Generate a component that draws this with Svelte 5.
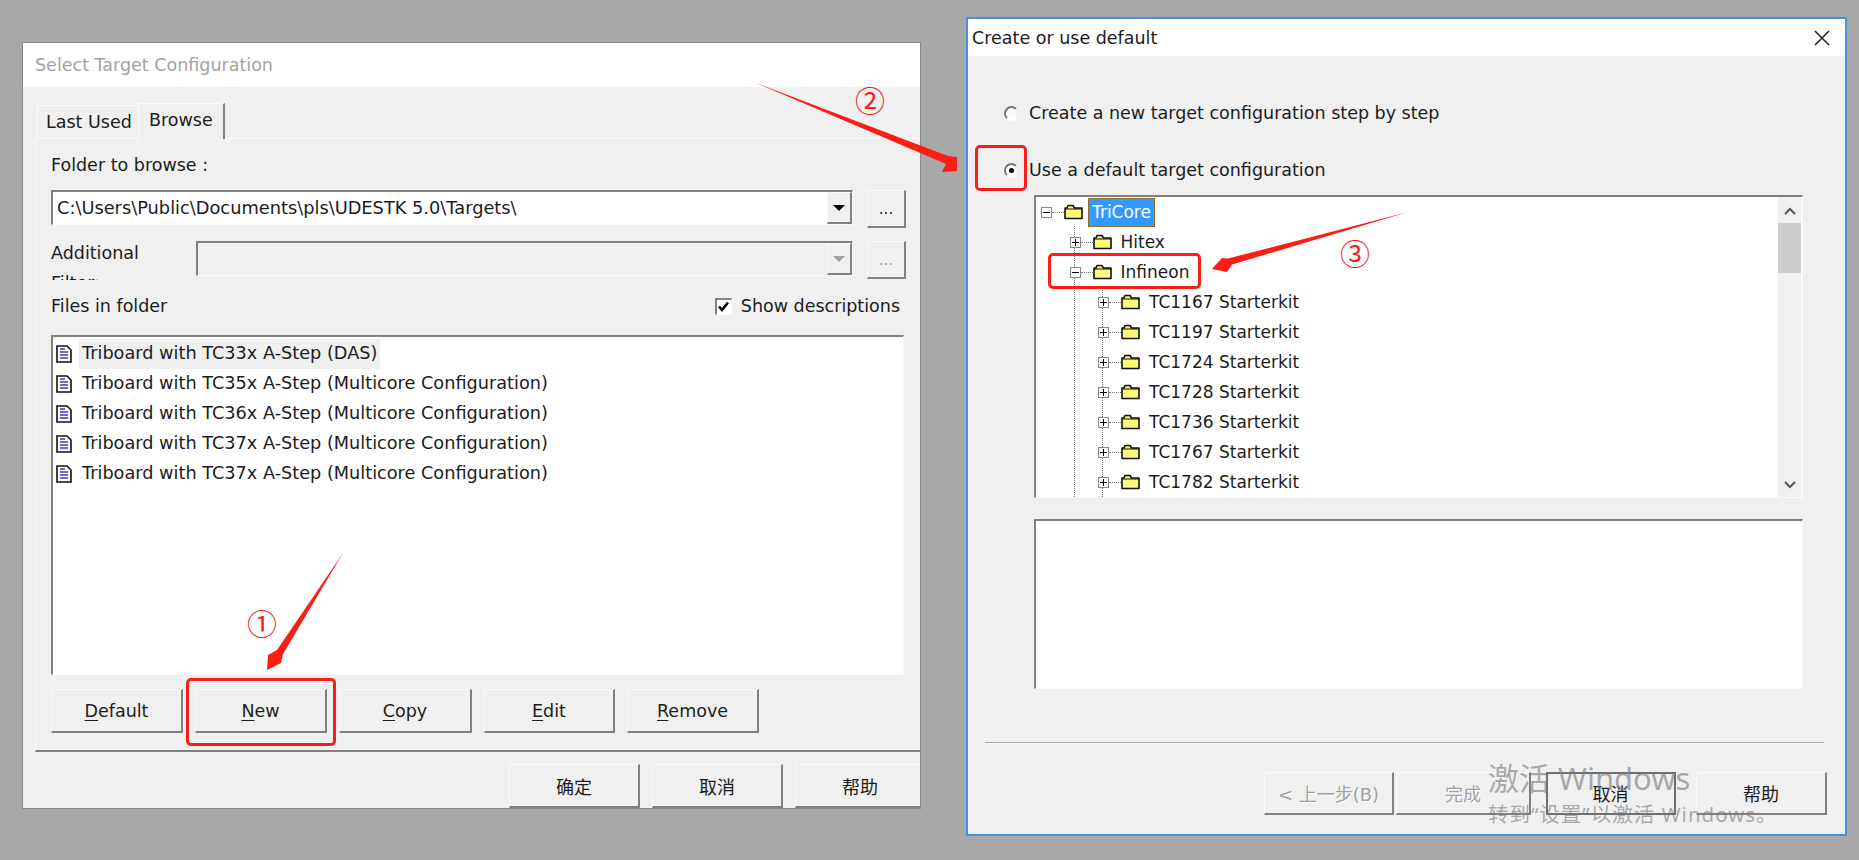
<script>
  const files = [
    'Triboard with TC33x A-Step (DAS)',
    'Triboard with TC35x A-Step (Multicore Configuration)',
    'Triboard with TC36x A-Step (Multicore Configuration)',
    'Triboard with TC37x A-Step (Multicore Configuration)',
    'Triboard with TC37x A-Step (Multicore Configuration)'
  ];
  const actions = [
    { first: 'D', rest: 'efault', w: 132 },
    { first: 'N', rest: 'ew', w: 132 },
    { first: 'C', rest: 'opy', w: 133 },
    { first: 'E', rest: 'dit', w: 131 },
    { first: 'R', rest: 'emove', w: 132 }
  ];
  const tree = [
    { label: 'TriCore', level: 0, open: true, selected: true },
    { label: 'Hitex', level: 1 },
    { label: 'Infineon', level: 1, open: true },
    { label: 'TC1167 Starterkit', level: 2 },
    { label: 'TC1197 Starterkit', level: 2 },
    { label: 'TC1724 Starterkit', level: 2 },
    { label: 'TC1728 Starterkit', level: 2 },
    { label: 'TC1736 Starterkit', level: 2 },
    { label: 'TC1767 Starterkit', level: 2 },
    { label: 'TC1782 Starterkit', level: 2 }
  ];
</script>

<div class="desktop">
  <section class="win left">
    <header class="title muted">Select Target Configuration</header>
    <div class="tabs">
      <div class="tab">Last Used</div>
      <div class="tab active">Browse</div>
    </div>
    <div class="pane">
      <div class="label folder-label">Folder to browse :</div>
      <div class="field-row">
        <div class="combo">
          <span class="value">C:\Users\Public\Documents\pls\UDESTK 5.0\Targets\</span>
          <span class="drop"><i class="tri"></i></span>
        </div>
        <button class="btn dots">...</button>
      </div>
      <div class="field-row second">
        <div class="clip-label">Additional<br />Filter:</div>
        <div class="combo off">
          <span class="value"></span>
          <span class="drop"><i class="tri"></i></span>
        </div>
        <button class="btn dots off-text">...</button>
      </div>
      <div class="files-row">
        <span>Files in folder</span>
        <span class="check">
          <span class="box">
            <svg width="13" height="13" viewBox="0 0 13 13"><path d="M2 6.5 5 10 11 2.5" fill="none" stroke="#000" stroke-width="2.6" /></svg>
          </span>
          Show descriptions
        </span>
      </div>
      <div class="list">
        {#each files as f, i}
          <div class="file">
            <svg class="doc" width="16" height="18" viewBox="0 0 16 18">
              <path d="M1 1h10l4 4v12H1z" fill="#fff" stroke="#111" stroke-width="1.6" />
              <path d="M4 7h8M4 10h8M4 13h8M4 4h5" stroke="#3a3ab0" stroke-width="1.3" />
            </svg>
            <span class="fname" class:hl={i === 0}>{f}</span>
          </div>
        {/each}
      </div>
      <div class="actions">
        {#each actions as a}
          <button class="btn act" style="width:{a.w}px"><u>{a.first}</u>{a.rest}</button>
        {/each}
      </div>
    </div>
    <div class="left-foot">
      <button class="btn foot">确定</button>
      <button class="btn foot">取消</button>
      <button class="btn foot last">帮助</button>
    </div>
  </section>

  <section class="win right">
    <header class="title">
      <span>Create or use default</span>
      <svg class="close" width="16" height="16" viewBox="0 0 16 16"><path d="M1 1l14 14M15 1 1 15" stroke="#222" stroke-width="1.5" /></svg>
    </header>
    <div class="radio r1"><span class="dot"></span>Create a new target configuration step by step</div>
    <div class="radio r2"><span class="dot on"></span>Use a default target configuration</div>
    <div class="tree">
      <div class="vline v1"></div>
      <div class="vline v2"></div>
      {#each tree as n}
        <div class="node" style="padding-left:{5 + n.level * 28.5}px">
          <span class="exp" class:open={n.open}></span>
          <span class="conn"></span>
          <svg class="folder" width="19" height="16" viewBox="0 0 19 16">
            <path d="M1 14.5V4h2l1-2.5h5L10.500 4H18v10.500z" fill="#fdf77a" stroke="#111" stroke-width="1.6" stroke-linejoin="round" />
            <path d="M1 5h17" stroke="#111" stroke-width="1" />
          </svg>
          <span class="nlabel" class:sel={n.selected}>{n.label}</span>
        </div>
      {/each}
      <div class="sb">
        <svg class="chev" width="12" height="8" viewBox="0 0 12 8"><path d="M1 7l5-5 5 5" fill="none" stroke="#555" stroke-width="2" /></svg>
        <div class="thumb"></div>
        <div class="grow"></div>
        <svg class="chev" width="12" height="8" viewBox="0 0 12 8"><path d="M1 1l5 5 5-5" fill="none" stroke="#555" stroke-width="2" /></svg>
      </div>
    </div>
    <div class="desc"></div>
    <div class="sep"></div>
    <div class="wizard">
      <button class="btn wz w1 disabled">&lt; 上一步(B)</button>
      <button class="btn wz w2 disabled">完成</button>
      <button class="btn wz w3 default">取消</button>
      <button class="btn wz w4">帮助</button>
    </div>
  </section>

  <div class="redbox b1"></div>
  <div class="redbox b2"></div>
  <div class="redbox b3"></div>

  <svg class="arrows" width="1859" height="860" viewBox="0 0 1859 860">
    <polygon fill="#fa1e14" points="343,553 283,654 281,663 267,670 268,655 277,650" />
    <polygon fill="#fa1e14" points="756,83 948,156 957,157 957,171 942,172 946,164" />
    <polygon fill="#fa1e14" points="1408,212 1228,258.500 1222,258 1212,269 1227,272 1232,264.500" />
  </svg>
  <span class="num n1">①</span>
  <span class="num n2">②</span>
  <span class="num n3">③</span>

  <div class="mark">
    <div class="m1">激活 Windows</div>
    <div class="m2">转到“设置”以激活 Windows。</div>
  </div>
</div>

<style>
  :global(body) { margin: 0; background: #a8a8a8; overflow: hidden; }
  * { box-sizing: border-box; }
  .desktop {
    position: relative; width: 1859px; height: 860px; overflow: hidden;
    background: #a8a8a8; color: #1c1c1c;
    font-family: "DejaVu Sans", "Noto Sans CJK SC", sans-serif; font-size: 17.5px;
  }
  .win { position: absolute; background: #f0f0f0; overflow: hidden; }
  .left { left: 22px; top: 42px; width: 899px; height: 767px; border: 1px solid #8a8a8a; }
  .right { left: 966px; top: 17px; width: 881px; height: 819px; border: 2px solid #4a90d9; }
  .title { background: #fff; display: flex; align-items: center; justify-content: space-between; }
  .left .title { height: 44px; padding-left: 12px; }
  .right .title { height: 37px; padding-left: 4px; padding-right: 15px; }
  .muted { color: #a3a3a3; }

  .tabs { display: flex; align-items: flex-end; height: 51px; padding-left: 14px; }
  .tab {
    width: 101px; height: 33px; padding-left: 8px; line-height: 33px;
    border: 1px solid #fafafa; border-bottom: 0; border-right: 0;
  }
  .tab.active {
    width: 87px; height: 36px; line-height: 32px; padding-left: 10px;
    border-right: 2px solid #808080; background: #f0f0f0;
    margin-bottom: -1px; position: relative; z-index: 1;
  }
  .pane {
    margin-left: 12px; height: 614px; padding: 14px 0 0 15px;
    border-top: 1px solid #fafafa; border-left: 1px solid #fafafa; border-bottom: 2px solid #808080;
  }
  .label { height: 24px; line-height: 24px; }
  .field-row { display: flex; gap: 14px; margin-top: 13px; align-items: flex-start; }
  .field-row.second { gap: 0; }
  .clip-label { width: 145px; height: 42px; overflow: hidden; line-height: 30px; margin-top: -3px; }
  .combo {
    width: 802px; height: 35px; background: #fff; display: flex; justify-content: space-between; align-items: stretch;
    border-top: 2px solid #808080; border-left: 2px solid #808080;
    border-bottom: 1px solid #fafafa; border-right: 1px solid #fafafa;
  }
  .second .combo { width: 657px; background: #f0f0f0; margin-right: 14px; }
  .value { padding-left: 4px; line-height: 32px; white-space: nowrap; font-size: 17.800px; }
  .drop {
    width: 25px; display: flex; align-items: center; justify-content: center; background: #f0f0f0;
    border-top: 1px solid #fafafa; border-left: 1px solid #fafafa;
    border-bottom: 2px solid #808080; border-right: 2px solid #808080;
  }
  .tri { width: 0; height: 0; border: 6px solid transparent; border-top: 6px solid #000; border-bottom: 0; }
  .off .tri { border-top-color: #a0a0a0; }

  .btn {
    font: inherit; color: inherit; background: #f0f0f0; padding: 0; margin: 0;
    border-top: 1px solid #fafafa; border-left: 1px solid #fafafa;
    border-bottom: 2px solid #808080; border-right: 2px solid #808080;
  }
  .dots { width: 39px; height: 38px; line-height: 30px; font-size: 15px; }
  .off-text { color: #a0a0a0; }

  .files-row {
    display: flex; justify-content: space-between; align-items: center; height: 28px; margin-top: 12px; padding-right: 20px;
  }
  .check { display: flex; align-items: center; gap: 9px; }
  .box {
    width: 17px; height: 17px; background: #fff; display: flex; align-items: center; justify-content: center;
    border-top: 2px solid #808080; border-left: 2px solid #808080;
    border-bottom: 1px solid #fafafa; border-right: 1px solid #fafafa;
  }
  .list {
    width: 853px; height: 340px; margin-top: 15px; background: #fff; padding: 2px 0 0 3px; font-size: 17.700px;
    border-top: 2px solid #808080; border-left: 2px solid #808080;
    border-bottom: 1px solid #fafafa; border-right: 1px solid #fafafa;
  }
  .file { display: flex; align-items: center; height: 30px; }
  .doc { flex: none; margin-right: 7px; }
  .fname { height: 30px; line-height: 29px; padding: 0 3px; }
  .hl { background: #efefef; }

  .actions { display: flex; gap: 12px; margin-top: 14px; }
  .act { height: 44px; }
  .act u { text-underline-offset: 3px; }
  .left-foot { display: flex; gap: 12px; padding: 12px 0 0 486px; }
  .foot { width: 131px; height: 44px; flex: none; font-size: 18px; }

  .close { display: block; }
  .radio { display: flex; align-items: center; height: 30px; padding-left: 36px; white-space: nowrap; }
  .r1 { margin-top: 42px; }
  .r2 { margin-top: 27px; }
  .dot {
    width: 15px; height: 15px; border-radius: 50%; margin-right: 10px; flex: none;
    background: #fafafa; border: 2px solid; border-color: #777 #eee #fff #777;
    display: flex; align-items: center; justify-content: center;
  }
  .dot.on::after { content: ""; width: 5px; height: 5px; border-radius: 50%; background: #000; }

  .tree {
    position: relative; margin: 10px 0 0 66px; width: 769px; height: 303px; background: #fff; overflow: hidden; font-size: 17px;
    border-top: 2px solid #808080; border-left: 2px solid #808080;
    border-bottom: 1px solid #fafafa; border-right: 1px solid #fafafa;
  }
  .node { display: flex; align-items: center; height: 30px; position: relative; }
  .exp {
    width: 11px; height: 11px; flex: none; border: 1px solid #888; background: #fff; position: relative;
  }
  .exp::before { content: ""; position: absolute; left: 1px; right: 1px; top: 4px; height: 1px; background: #000; }
  .exp::after { content: ""; position: absolute; top: 1px; bottom: 1px; left: 4px; width: 1px; background: #000; }
  .exp.open::after { display: none; }
  .conn { width: 12px; flex: none; border-top: 1px dotted #777; }
  .folder { flex: none; margin-right: 5px; }
  .nlabel { height: 29px; line-height: 27px; padding: 0 3px; white-space: nowrap; border: 1px solid transparent; }
  .sel { background: #3399ff; color: #fff; border: 1px dotted #7a5a10; }
  .vline { position: absolute; width: 0; border-left: 1px dotted #777; bottom: 0; }
  .v1 { left: 38px; top: 29px; }
  .v2 { left: 66px; top: 90px; }
  .sb {
    position: absolute; right: 1px; top: 0; bottom: 0; width: 23px; background: #f0f0f0;
    display: flex; flex-direction: column; align-items: center; padding: 10px 0 8px;
  }
  .thumb { width: 23px; height: 50px; background: #cdcdcd; margin-top: 8px; }
  .grow { flex: 1; }
  .desc {
    margin: 21px 0 0 66px; width: 769px; height: 170px; background: #fff;
    border-top: 2px solid #808080; border-left: 2px solid #808080;
    border-bottom: 1px solid #fafafa; border-right: 1px solid #fafafa;
  }
  .sep { margin: 53px 0 0 17px; width: 839px; border-top: 1px solid #a8a8a8; border-bottom: 1px solid #fafafa; }
  .wizard { display: flex; margin: 28px 0 0 296px; }
  .wz { height: 43px; flex: none; font-size: 18px; }
  .w1 { width: 130px; }
  .w2 { width: 135px; margin-left: 2px; }
  .w3 { width: 130px; margin-left: 15px; outline: 2px solid #6e6e6e; outline-offset: -2px; }
  .w4 { width: 131px; margin-left: 20px; }
  .disabled { color: #a0a0a0; text-shadow: 1px 1px 0 #fff; }

  .redbox { position: absolute; border: 3px solid #f5201a; border-radius: 5px; }
  .b1 { left: 186px; top: 678px; width: 150px; height: 68px; }
  .b2 { left: 975px; top: 145px; width: 52px; height: 46px; }
  .b3 { left: 1048px; top: 253px; width: 153px; height: 36px; }
  .arrows { position: absolute; left: 0; top: 0; }
  .num {
    position: absolute; color: #f5201a; font-family: "Noto Sans CJK SC", sans-serif; font-size: 30px; line-height: 30px;
  }
  .n1 { left: 247px; top: 607px; }
  .n2 { left: 855px; top: 84px; }
  .n3 { left: 1340px; top: 237px; }
  .mark { position: absolute; left: 1488px; top: 759px; color: rgba(120,120,120,0.6); font-family: "Noto Sans", "Noto Sans CJK SC", sans-serif; }
  .m1 { font-size: 31px; line-height: 38px; }
  .m2 { font-size: 20.500px; letter-spacing: 1px; line-height: 26px; margin-top: 4px; }
</style>
